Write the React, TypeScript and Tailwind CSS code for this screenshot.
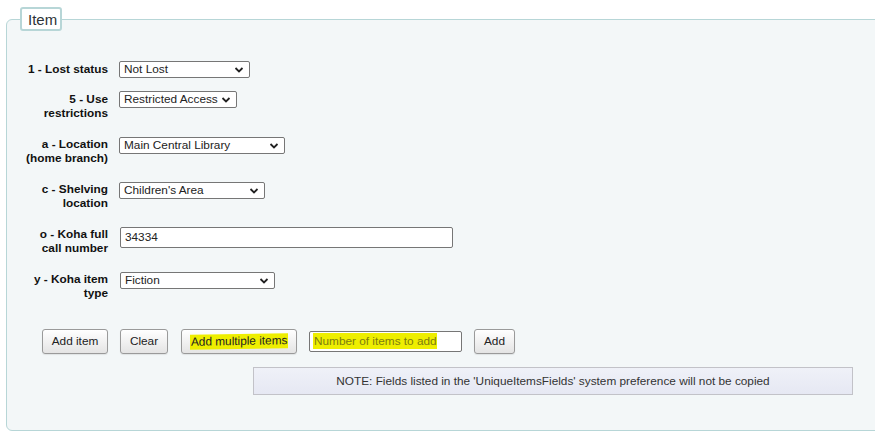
import React from "react";

function Chevron() {
  return (
    <svg
      width="10"
      height="7"
      viewBox="0 0 10 7"
      className="absolute right-[5px] top-1/2 -translate-y-1/2"
    >
      <polyline points="1.5,1.5 5,5 8.5,1.5" fill="none" stroke="#222" strokeWidth="1.8" />
    </svg>
  );
}

function FakeSelect({ value, width }: { value: string; width: string }) {
  return (
    <div
      className={`relative h-[17px] ${width} border border-[#767676] rounded-[2px] bg-white text-[11.8px] leading-[15px] pl-[4px] text-[#222] whitespace-nowrap overflow-hidden`}
    >
      {value}
      <Chevron />
    </div>
  );
}

function Label({ lines }: { lines: string[] }) {
  return (
    <div className="w-[101px] pt-[1px] text-right text-[11.8px] leading-[14px] font-bold text-[#111]">
      {lines.map((l) => (
        <div key={l}>{l}</div>
      ))}
    </div>
  );
}

const btn =
  "h-[25px] border border-[#9a9a9a] rounded-[3px] bg-gradient-to-b from-[#ffffff] to-[#e4e4e4] text-[11.8px] text-[#222] flex items-center justify-center shadow-[0_1px_1px_rgba(0,0,0,0.08)]";

export default function App() {
  return (
    <div className="w-[875px] h-[434px] overflow-hidden bg-white font-['Liberation_Sans',Arial,sans-serif]">
      <div className="relative ml-[6px] mt-[19px] w-[900px] h-[412px] border border-[#b7d6d7] rounded-[6px] bg-[#f3f7f8]">
        <div className="absolute left-[13px] top-[-13px] w-[42px] h-[24px] border-2 border-[#b7d6d7] rounded-[3px] bg-white text-[15px] leading-[21px] text-[#2d3338] pl-[6px]">
          Item
        </div>

        <div className="pt-[41px]">
          <div className="flex items-start h-[30px]">
            <Label lines={["1 - Lost status"]} />
            <div className="ml-[11px]">
              <FakeSelect value="Not Lost" width="w-[131px]" />
            </div>
          </div>
          <div className="flex items-start h-[45px]">
            <Label lines={["5 - Use", "restrictions"]} />
            <div className="ml-[11px]">
              <FakeSelect value="Restricted Access" width="w-[118px]" />
            </div>
          </div>
          <div className="flex items-start h-[45px]">
            <Label lines={["a - Location", "(home branch)"]} />
            <div className="ml-[11px] mt-[1px]">
              <FakeSelect value="Main Central Library" width="w-[166px]" />
            </div>
          </div>
          <div className="flex items-start h-[45px]">
            <Label lines={["c - Shelving", "location"]} />
            <div className="ml-[11px] mt-[1px]">
              <FakeSelect value="Children's Area" width="w-[146px]" />
            </div>
          </div>
          <div className="flex items-start h-[45px]">
            <Label lines={["o - Koha full", "call number"]} />
            <div className="ml-[12px] mt-[1px] w-[333px] h-[21px] border border-[#767676] rounded-[2px] bg-white text-[11.8px] leading-[19px] pl-[4px] text-[#222]">
              34334
            </div>
          </div>
          <div className="flex items-start h-[45px]">
            <Label lines={["y - Koha item", "type"]} />
            <div className="ml-[12px] mt-[1px]">
              <FakeSelect value="Fiction" width="w-[155px]" />
            </div>
          </div>

          <div className="flex items-center mt-[13px] pl-[35px]">
            <div className={`${btn} w-[66px]`}>Add item</div>
            <div className={`${btn} w-[48px] ml-[12px]`}>Clear</div>
            <div className={`${btn} w-[116px] ml-[13px]`}>
              <span className="bg-[#eeee00] px-[1px] leading-[15px] -skew-y-1">Add multiple items</span>
            </div>
            <div className="ml-[12px] w-[153px] h-[21px] border border-[#767676] rounded-[2px] bg-white pl-[3px] pt-[1px]">
              <span className="block w-[124px] h-[16px] bg-[#eeee00] text-[11.8px] leading-[16px] text-[#7d7d10] pl-[1px] whitespace-nowrap">
                Number of items to add
              </span>
            </div>
            <div className={`${btn} w-[41px] ml-[12px]`}>Add</div>
          </div>

          <div className="mt-[13px] ml-[246px] w-[600px] h-[28px] border border-[#c2c2c8] bg-gradient-to-b from-[#eff1f8] to-[#e6e8f3] text-[11.8px] leading-[26px] text-center text-[#333]">
            NOTE: Fields listed in the 'UniqueItemsFields' system preference will not be copied
          </div>
        </div>
      </div>
    </div>
  );
}
